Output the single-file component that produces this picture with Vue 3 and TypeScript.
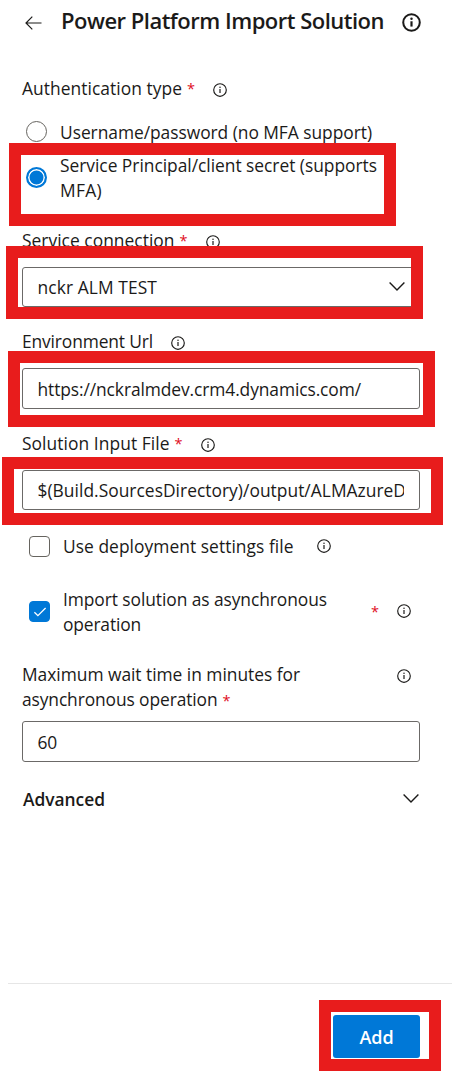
<script setup lang="ts">
import { defineComponent, h, ref } from 'vue'

// Spreads a label's letters evenly so that it spans a fixed width in pixels.
const vFit = {
  mounted(el: HTMLElement, binding: { value: number }) {
    const count = (el.textContent ?? '').length
    const natural = el.getBoundingClientRect().width
    el.style.letterSpacing = `${(binding.value - natural) / count}px`
  },
}

const InfoIcon = defineComponent({
  props: { bold: Boolean },
  setup(props) {
    return () =>
      h('svg', { viewBox: '0 0 14 14', fill: 'none', stroke: 'currentColor' }, [
        h('circle', { cx: 7, cy: 7, r: props.bold ? 6.1 : 6.3, 'stroke-width': props.bold ? 1.5 : 1.15 }),
        h('path', { d: 'M7 6.1V10', 'stroke-width': props.bold ? 1.6 : 1.2 }),
        h('circle', { cx: 7, cy: 4.3, r: props.bold ? 0.9 : 0.75, fill: 'currentColor', stroke: 'none' }),
      ])
  },
})

const auth = ref<'password' | 'principal'>('principal')
const useSettings = ref(false)
const asyncImport = ref(true)
</script>

<template>
  <main class="panel">
    <header class="header">
      <svg class="back" viewBox="0 0 17 14" fill="none" stroke="currentColor" stroke-width="1.2">
        <path d="M16.5 7H1M7.3 .7L1 7l6.3 6.3" />
      </svg>
      <h1><span v-fit="323">Power Platform Import Solution</span></h1>
      <InfoIcon bold class="info big" />
    </header>

    <div class="label auth"><span v-fit="160">Authentication type</span><i class="req">*</i><InfoIcon class="info" /></div>
    <div class="radio first" @click="auth = 'password'">
      <span class="dot" :class="{ on: auth === 'password' }"></span>
      <p><span v-fit="312">Username/password (no MFA support)</span></p>
    </div>
    <div class="radio" @click="auth = 'principal'">
      <span class="dot" :class="{ on: auth === 'principal' }"></span>
      <p><span v-fit="317">Service Principal/client secret (supports</span><br /><span v-fit="42">MFA)</span></p>
    </div>

    <div class="label service"><span v-fit="152.5">Service connection</span><i class="req">*</i><InfoIcon class="info" /></div>
    <div class="field select">
      <span v-fit="119.5">nckr ALM TEST</span>
      <svg class="chevron" viewBox="0 0 16 9" fill="none" stroke="currentColor" stroke-width="1.4"><path d="M.6.6L8 8 15.4.6" /></svg>
    </div>

    <div class="label env"><span v-fit="131">Environment Url</span><InfoIcon class="info" /></div>
    <div class="field tall"><span v-fit="323.5">https://nckralmdev.crm4.dynamics.com/</span></div>

    <div class="label solution"><span v-fit="147.5">Solution Input File</span><i class="req">*</i><InfoIcon class="info" /></div>
    <div class="field"><div class="clip"><span v-fit="368.5">$(Build.SourcesDirectory)/output/ALMAzureD</span></div></div>

    <div class="check settings" @click="useSettings = !useSettings">
      <span class="box" :class="{ on: useSettings }"></span>
      <p><span v-fit="230.5">Use deployment settings file</span></p>
      <InfoIcon class="info" />
    </div>
    <div class="check async" @click="asyncImport = !asyncImport">
      <span class="box" :class="{ on: asyncImport }">
        <svg v-if="asyncImport" viewBox="0 0 14 10" fill="none" stroke="#fff" stroke-width="1.3"><path d="M1.4 5.2l3.5 3.4L12.6 1" /></svg>
      </span>
      <p><span v-fit="264">Import solution as asynchronous</span><br /><span v-fit="78">operation</span></p>
      <i class="req">*</i>
      <InfoIcon class="info" />
    </div>

    <div class="label wait">
      <p><span v-fit="278">Maximum wait time in minutes for</span><br /><span v-fit="195.5">asynchronous operation</span><i class="req">*</i></p>
      <InfoIcon class="info" />
    </div>
    <div class="field tall last"><span v-fit="19.5">60</span></div>

    <div class="advanced">
      <strong><span v-fit="82">Advanced</span></strong>
      <svg class="chevron" viewBox="0 0 16 9" fill="none" stroke="currentColor" stroke-width="1.4"><path d="M.6.6L8 8 15.4.6" /></svg>
    </div>

    <footer class="footer"><button type="button"><span v-fit="34">Add</span></button></footer>

    <div class="mark mark-auth"></div>
    <div class="mark mark-service"></div>
    <div class="mark mark-env"></div>
    <div class="mark mark-solution"></div>
    <div class="mark mark-add"></div>
  </main>
</template>

<style>
body {
  margin: 0;
  background: #fff;
}
</style>

<style scoped>
.panel {
  position: relative;
  display: flex;
  flex-direction: column;
  box-sizing: border-box;
  width: 452px;
  height: 1071px;
  overflow: hidden;
  background: #fff;
  color: #1b1a19;
  font: 17.4px/25px 'Open Sans', 'Noto Sans', sans-serif;
  white-space: nowrap;
}
p, h1 { margin: 0; }
svg { display: block; flex: none; }
.header {
  display: flex;
  align-items: center;
  height: 45px;
  padding-left: 25px;
}
.back { width: 17px; height: 14px; }
h1 {
  width: 322px;
  margin: -5px 0 0 19px;
  font-size: 22px;
  font-weight: 600;
  line-height: 30px;
}
.info { width: 14px; height: 14px; }
.info.big { width: 19px; height: 19px; margin-left: 19px; }
.label {
  display: flex;
  align-items: center;
  height: 25px;
  padding-left: 22px;
}
.label .info { margin: 3px 0 0 18px; }
.req {
  width: 8px;
  margin-left: 5px;
  color: #e00b1c;
  font-style: normal;
  font-size: 14.5px;
}
.auth { margin-top: 31px; }
.radio {
  display: flex;
  align-items: center;
  padding-left: 26px;
}
.radio.first { margin: 19px 0 8px; }
.radio p { margin-left: 13px; }
.dot {
  box-sizing: border-box;
  width: 21px;
  height: 21px;
  margin-top: -2px;
  border: 1px solid #66645f;
  border-radius: 50%;
}
.dot.on {
  border: 2px solid #0078d7;
  background: #0078d7;
  box-shadow: inset 0 0 0 1.5px #fff;
}
.service { margin-top: 25px; }
.field {
  display: flex;
  align-items: center;
  justify-content: space-between;
  box-sizing: border-box;
  width: 398px;
  height: 40px;
  margin: 14px 0 0 22px;
  padding: 1px 15px 0 14.5px;
  border: 1px solid #6b6967;
  border-radius: 3px;
}
.field.tall { height: 41px; }
.field.select { padding-right: 14px; }
.clip { width: 367px; overflow: hidden; }
.chevron { width: 16px; height: 9px; }
.select .chevron { margin-top: -2px; }
.env { margin-top: 22px; }
.solution { margin-top: 22px; }
.check {
  display: flex;
  align-items: center;
  padding-left: 29px;
}
.settings { margin-top: 24px; }
.async { margin-top: 28px; }
.check p { width: 265px; margin-left: 13px; }
.settings p { width: 231px; }
.settings .info { margin: -1px 0 0 23px; }
.async .req { margin: -2px 0 0 43px; }
.async .info { margin: -2px 0 0 18px; }
.box {
  display: flex;
  align-items: center;
  justify-content: center;
  box-sizing: border-box;
  width: 21px;
  height: 21px;
  border: 1px solid #66645f;
  border-radius: 4px;
}
.async .box { margin-top: -1px; }
.box.on { border-color: #0078d7; background: #0078d7; }
.box svg { width: 14px; height: 10px; }
.label.wait { height: 50px; margin-top: 25px; align-items: flex-start; }
.wait p { width: 356px; }
.wait .info { margin: 7px 0 0 19px; }
.field.last { margin-top: 9px; }
.advanced {
  display: flex;
  align-items: center;
  justify-content: space-between;
  height: 25px;
  margin: 25px 33px 0 23px;
}
.advanced strong { font-weight: 600; }
.advanced .chevron { margin-top: -2px; }
.footer {
  display: flex;
  justify-content: flex-end;
  margin: auto 0 0 8px;
  height: 56px;
  padding: 31px 32px 0 0;
  border-top: 1px solid #e6e6e6;
}
button {
  width: 87px;
  height: 43px;
  padding: 2px 0 0;
  border: 0;
  border-radius: 3px;
  background: #0078d7;
  color: #fff;
  font: 600 18px/25px 'Open Sans', 'Noto Sans', sans-serif;
}
.mark {
  position: absolute;
  box-sizing: border-box;
  border: 12px solid #e81c1c;
  pointer-events: none;
}
.mark-auth { left: 9px; top: 143px; width: 387px; height: 83px; }
.mark-service { left: 6px; top: 246px; width: 417px; height: 73px; }
.mark-env { left: 8px; top: 351px; width: 427px; height: 76px; }
.mark-solution { left: 2px; top: 457px; width: 441px; height: 68px; }
.mark-add { left: 319px; top: 1000px; width: 122px; height: 71px; }
</style>
